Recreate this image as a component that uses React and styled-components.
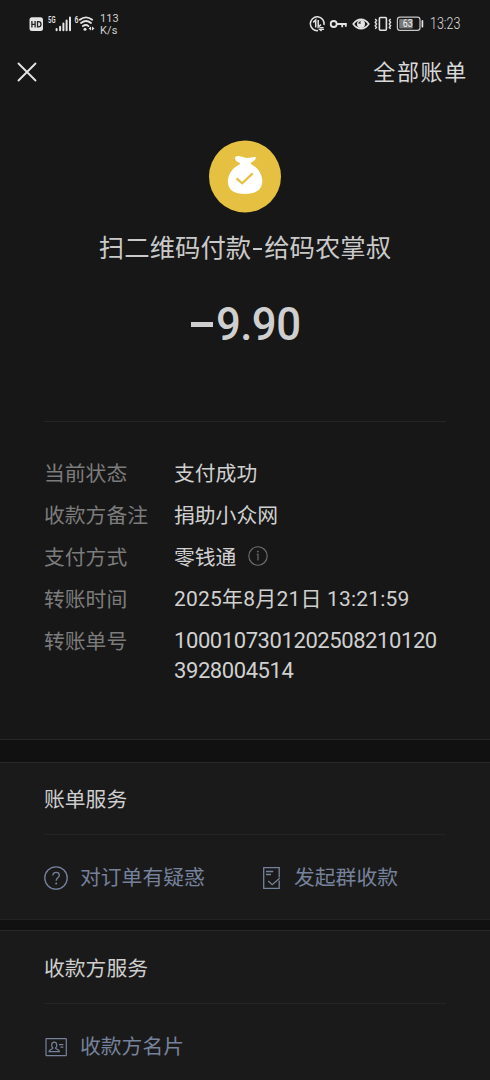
import React from 'react';
import styled, { createGlobalStyle } from 'styled-components';

const GlobalStyle = createGlobalStyle`
  * { box-sizing: border-box; }
  body {
    margin: 0; background: #1a1a1a; color: #cfcfcf;
    font-family: Roboto, "Noto Sans CJK SC", sans-serif;
  }
  svg { display: block; flex: none; }
`;

const Page = styled.div`
  width: 490px; height: 1080px; overflow: hidden;
  display: flex; flex-direction: column; background: #1a1a1a;
`;

const StatusBar = styled.header`
  height: 48px; padding: 0 29px; flex: none;
  display: flex; align-items: center; justify-content: space-between;
`;

const StatusGroup = styled.div`display: flex; align-items: center;`;

const NetSpeed = styled.div`
  margin-left: 5px; font-size: 11px; line-height: 12px; color: #d0d0d0; letter-spacing: 0.1px;
  padding-top: 1px;
`;

const Clock = styled.span`
  width: 31px; margin-left: 5px; font-size: 16px; line-height: 18px; color: #dedede;
  font-weight: 300; white-space: nowrap; transform: scaleX(0.78); transform-origin: left;
`;

const NavBar = styled.nav`
  height: 48px; padding: 0 24px 0 17px; flex: none;
  display: flex; align-items: center; justify-content: space-between;
`;

const AllBills = styled.span`
  font-family: "Noto Sans CJK SC", sans-serif; font-weight: 400; font-size: 22px;
  line-height: 30px; letter-spacing: 1.7px; margin: 0 -2px 5px 0; color: #d8d8d8;
`;

const Bill = styled.main`
  height: 644px; padding: 44px 44px 0; flex: none; background: #171717;
  border-bottom: 1px solid #272727;
  display: flex; flex-direction: column; align-items: center;
`;

const Top = styled.div`background: #171717; flex: none;`;

const Payee = styled.h1`
  margin: 16px 0 0; font-size: 25.4px; line-height: 38px; font-weight: 400;
  white-space: nowrap; color: #c9c9c9;
`;

const Dash = styled.span`
  display: inline-block; width: 9px; height: 2px; margin: 0 2px; vertical-align: 7px; background: #c9c9c9;
`;

const Amount = styled.div`
  margin-top: 27px; height: 60px; display: flex; align-items: center; gap: 3px;
  font-size: 46.5px; line-height: 60px; font-weight: 500; color: #cfcfcf;
`;

const Minus = styled.span`width: 22px; height: 5px; background: #cfcfcf;`;

const Figure = styled.span`
  width: 84px; letter-spacing: -0.6px; transform: scaleX(0.94); transform-origin: left;
`;

const Divider = styled.div`
  height: 1px; align-self: stretch; background: ${p => p.$color || '#252525'}; margin-top: ${p => p.$top || 0}px;
`;

const Details = styled.dl`
  margin: 36px 0 0; align-self: stretch;
  display: grid; grid-template-columns: 130px 1fr; row-gap: 12px;
  font-size: 20.8px; line-height: 30px;
`;

const Label = styled.dt`color: #7c7c7c; padding-top: 1px; height: 30px;`;

const Value = styled.dd`
  margin: 0; color: #d0d0d0; white-space: nowrap; padding-top: ${p => (p.$flush ? 0 : 1)}px;
  height: ${p => (p.$flush ? 'auto' : '30px')};
  display: flex; align-items: center; gap: 12px;
  svg { margin-bottom: 3px; }
`;

const DateText = styled.span`font-size: 21px; letter-spacing: 0.2px;`;

const Digits = styled.span`font-size: 22px; letter-spacing: -0.42px; white-space: pre-line;`;

const Gap = styled.div`height: ${p => p.$h}px; background: #111111; flex: none;`;

const Card = styled.section`
  height: ${p => p.$h}px; padding: ${p => p.$pad}px 44px 0; flex: none;
  background: #1a1a1a; border-top: 1px solid #292929; border-bottom: 1px solid #222222;
`;

const CardTitle = styled.h2`
  margin: 0; font-size: 20.8px; line-height: 30px; font-weight: 400; color: #cecece;
`;

const Services = styled.div`
  display: grid; grid-template-columns: 216px 1fr; margin-top: ${p => p.$top}px;
`;

const Service = styled.a`
  display: flex; align-items: center; gap: 12px; height: 30px;
  font-size: 20.8px; line-height: 30px; color: #76829c; white-space: nowrap;
`;

const SignalIcons = () => (
  <svg width="66" height="24" viewBox="29 12 66 24" fill="none" stroke="#e4e4e4">
    <rect x="29.5" y="17.3" width="13.5" height="13.7" rx="2.5" fill="#e4e4e4" stroke="none" />
    <path d="M31.9 21v6.6M35.1 21v6.6M31.9 24.3h3.2M37.5 21.7v5.2h1c1.8 0 2.5-1 2.5-2.6s-.7-2.6-2.5-2.6z" stroke="#222" strokeWidth="1.3" />
    <text x="48" y="23.2" fontFamily="Roboto" fontSize="9.6" fontWeight="600" fill="#e4e4e4" stroke="none" textLength="7.5" lengthAdjust="spacingAndGlyphs">5G</text>
    <path d="M56.6 30.2v-1.3M60.1 30.2v-3.4M63.4 30.2v-6.6M66.6 30.2v-9.6M70 30.2v-12.6" strokeWidth="2" strokeLinecap="round" />
    <text x="74.4" y="22.8" fontFamily="Roboto" fontSize="9" fontWeight="600" fill="#e4e4e4" stroke="none" textLength="4" lengthAdjust="spacingAndGlyphs">6</text>
    <path d="M79.8 19.7q6.2-4.8 12.4 0M81 23q5-4.1 10 0M82.9 26.1q3-2.2 5.6 0" strokeWidth="1.8" strokeLinecap="round" />
    <circle cx="85" cy="29.2" r="1.5" fill="#e4e4e4" stroke="none" />
    <path d="M91.1 26.6v4l-2.6-2zM92 26.6v4l2.5-2z" fill="#e4e4e4" stroke="none" />
  </svg>
);

const SystemIcons = () => (
  <svg width="116" height="24" viewBox="310 12 116 24" fill="none" stroke="#e4e4e4">
    <path d="M319 30.6A6.9 6.9 0 1 1 325 25" strokeWidth="1.5" />
    <path d="M314.2 22.4l2.5-2.4v7.6M319.2 20v7l2.8-2.3" strokeWidth="1.5" />
    <path d="M320.4 27.6h4.2M325 29.4h-4.4l2 1.6" strokeWidth="1.3" />
    <circle cx="334.7" cy="24" r="3" strokeWidth="1.8" />
    <path d="M337.6 24h10.2M343.2 24v3.2M346.8 24v2.8" strokeWidth="1.8" />
    <path d="M354.2 24c4.5-6.2 11.1-6.2 15.6 0-4.5 6.2-11.1 6.2-15.6 0z" strokeWidth="1.6" />
    <circle cx="362" cy="24" r="4" fill="#e4e4e4" stroke="none" />
    <path d="M361.8 20.8a3 3 0 0 0 0 3l-3-.6z" fill="#171717" stroke="none" />
    <rect x="380.4" y="17.5" width="7" height="12.8" rx="1" strokeWidth="1.6" />
    <path d="M376.2 19l1.3 1.6-1.3 1.7 1.3 1.7-1.3 1.7 1.3 1.7-1.3 1.5M391.6 19l-1.3 1.6 1.3 1.7-1.3 1.7 1.3 1.7-1.3 1.7 1.3 1.5" strokeWidth="1.4" />
    <rect x="398.4" y="17.2" width="22.6" height="13.2" rx="2.6" stroke="#c8c8c8" strokeWidth="1.2" />
    <rect x="400.2" y="19" width="13.6" height="9.6" rx="1" fill="#777" stroke="none" />
    <text x="403.8" y="27.4" fontFamily="Roboto" fontSize="10" fontWeight="400" fill="#f2f2f2" stroke="none" textLength="10" lengthAdjust="spacingAndGlyphs">63</text>
    <path d="M423.4 20.9v5.8" strokeWidth="1.7" strokeLinecap="round" />
  </svg>
);

const CloseIcon = () => (
  <svg width="20" height="20" viewBox="0 0 20 20" stroke="#e6e6e6" strokeWidth="1.8" strokeLinecap="round">
    <path d="M1.5 1.5l17 17M18.5 1.5l-17 17" />
  </svg>
);

const MoneyBag = () => (
  <svg width="72" height="73" viewBox="0 0 72 73">
    <circle cx="36" cy="36.5" r="36" fill="#e6c141" />
    <path d="M26 18.7c-.6-1.8 1.2-2.9 3.6-2.8 3.4.2 5.4 2 8.7 2 3 0 5-1.1 7.2-.9 1.7.1 1.6 1.3.8 2.3-1.2 1.6-2.9 2.8-4.7 3.5 0 1 .8 1.6 1.8 2.2 5.600 3 9.900 9.200 9.900 16.100 0 8.500-6.200 12.900-17.200 12.900S18.900 50 18.900 41.500c0-6.900 4.500-13.400 10.300-16.300 1.500-.7 2-1.400 1.700-2.200-2-.7-4.300-2.300-4.900-4.300z" fill="#fff" />
    <path d="M27.500 38.400l5.600 4.900L43.700 33.400" fill="none" stroke="#e6c141" strokeWidth="2.300" />
  </svg>
);

const InfoIcon = () => (
  <svg width="20" height="20" viewBox="0 0 20 20" fill="none" stroke="#707070">
    <circle cx="10" cy="10" r="9.2" strokeWidth="1.1" />
    <path d="M8.700 8.200H10v6.300" strokeWidth="1.1" />
    <circle cx="9.900" cy="5.600" r=".9" fill="#707070" stroke="none" />
  </svg>
);

const QuestionIcon = () => (
  <svg width="24" height="24" viewBox="0 0 24 24" fill="none" stroke="#76829c" strokeWidth="1.3">
    <circle cx="12" cy="12" r="11.2" />
    <path d="M8.900 9.600c0-2 1.300-3.200 3.200-3.200s3.200 1.200 3.200 2.800c0 2.300-3.100 2.700-3.100 5.200v.4" />
    <circle cx="12.200" cy="17.400" r="1" fill="#76829c" stroke="none" />
  </svg>
);

const CollectIcon = () => (
  <svg width="22" height="24" viewBox="0 0 22 24" fill="none" stroke="#76829c" strokeWidth="1.3">
    <path d="M19.200 11.600V1.700H3.700v20.700h15.500v-8M6 5.500h7.200M6 8.500h5M8.200 15l4 3.700 7.400-6.500" />
  </svg>
);

const CardIcon = () => (
  <svg width="24" height="20" viewBox="0 0 24 20" fill="none" stroke="#76829c" strokeWidth="1.2">
    <rect x="2" y="1.6" width="20.300" height="17" rx=".6" />
    <path d="M8.900 10.900C7 9.600 7.200 5.200 10.200 5.200s3.200 4.400 1.300 5.700c0 1.500 3.900 1.300 3.900 3.800H5c0-2.500 3.900-2.300 3.900-3.800z" />
    <path d="M15 7.600h4.300M16.500 10.100h2.800" />
  </svg>
);

const App = () => (
  <>
    <GlobalStyle />
    <Page>
      <Top>
        <StatusBar>
          <StatusGroup>
            <SignalIcons />
            <NetSpeed>113<br />K/s</NetSpeed>
          </StatusGroup>
          <StatusGroup>
            <SystemIcons />
            <Clock>13:23</Clock>
          </StatusGroup>
        </StatusBar>
        <NavBar>
          <CloseIcon />
          <AllBills>全部账单</AllBills>
        </NavBar>
      </Top>
      <Bill>
        <MoneyBag />
        <Payee>扫二维码付款<Dash />给码农掌叔</Payee>
        <Amount><Minus /><Figure>9.90</Figure></Amount>
        <Divider $top={67} />
        <Details>
          <Label>当前状态</Label>
          <Value>支付成功</Value>
          <Label>收款方备注</Label>
          <Value>捐助小众网</Value>
          <Label>支付方式</Label>
          <Value>零钱通<InfoIcon /></Value>
          <Label>转账时间</Label>
          <Value $flush><DateText>2025年8月21日 13:21:59</DateText></Value>
          <Label>转账单号</Label>
          <Value $flush><Digits>{'1000107301202508210120\n3928004514'}</Digits></Value>
        </Details>
      </Bill>
      <Gap $h={22} />
      <Card $h={158} $pad={22}>
        <CardTitle>账单服务</CardTitle>
        <Divider $top={19} $color="#232323" />
        <Services $top={28}>
          <Service><QuestionIcon />对订单有疑惑</Service>
          <Service><CollectIcon />发起群收款</Service>
        </Services>
      </Card>
      <Gap $h={10} />
      <Card $h={160} $pad={23}>
        <CardTitle>收款方服务</CardTitle>
        <Divider $top={19} />
        <Services $top={28}>
          <Service><CardIcon />收款方名片</Service>
        </Services>
      </Card>
    </Page>
  </>
);

export default App;
